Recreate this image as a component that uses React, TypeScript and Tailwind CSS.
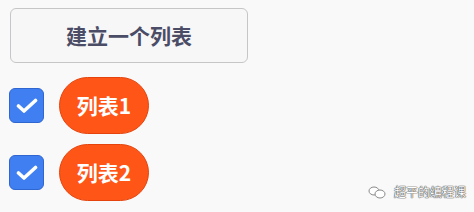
const cjk = { fontFamily: '"Noto Sans CJK SC", "Noto Sans", sans-serif' }

function CheckBox() {
  return (
    <div className="flex h-[35px] w-[35px] items-center justify-center rounded-[6px] border border-[#2f66d0] bg-[#3f7ff2]">
      <svg width="22" height="16" viewBox="0 0 22 16" fill="none">
        <path
          d="M2.5 8l5.5 5L19.5 2.5"
          stroke="white"
          strokeWidth="3.6"
          strokeLinecap="round"
          strokeLinejoin="round"
        />
      </svg>
    </div>
  )
}

function ListRow({ name }: { name: string }) {
  return (
    <div className="flex items-center gap-[15px]">
      <CheckBox />
      <div className="flex h-[57px] w-[90px] items-center justify-center rounded-full border border-[#e4440c] bg-[#ff5618] text-[21px] font-bold text-white">
        {name}
      </div>
    </div>
  )
}

export default function App() {
  const lists = ['列表1', '列表2']

  return (
    <div className="relative h-[212px] w-[474px] overflow-hidden bg-[#f9f9f9]" style={cjk}>
      <div className="flex flex-col pl-[9px] pt-[8px]">
        <button className="ml-[1px] flex h-[55px] w-[238px] items-center justify-center rounded-[6px] border border-[#c6c6c9] bg-[#f7f7f8] text-[21px] font-bold text-[#4b4d66]">
          建立一个列表
        </button>
        <div className="mt-[14px] flex flex-col gap-[10px]">
          {lists.map((l) => (
            <ListRow key={l} name={l} />
          ))}
        </div>
      </div>

      {/* watermark */}
      <div className="absolute left-[368px] top-[183px] flex items-center gap-[8px] text-[12px] text-white [text-shadow:0_0_1px_#444,0_0_1px_#444,0_0_1px_#444]">
        <svg width="18" height="13" viewBox="0 0 18 13" fill="none" stroke="#888" strokeWidth="1">
          <ellipse cx="6" cy="5" rx="5" ry="4" fill="white" />
          <ellipse cx="12" cy="8" rx="5" ry="4" fill="white" />
        </svg>
        <span>超平的编程课</span>
      </div>
    </div>
  )
}
